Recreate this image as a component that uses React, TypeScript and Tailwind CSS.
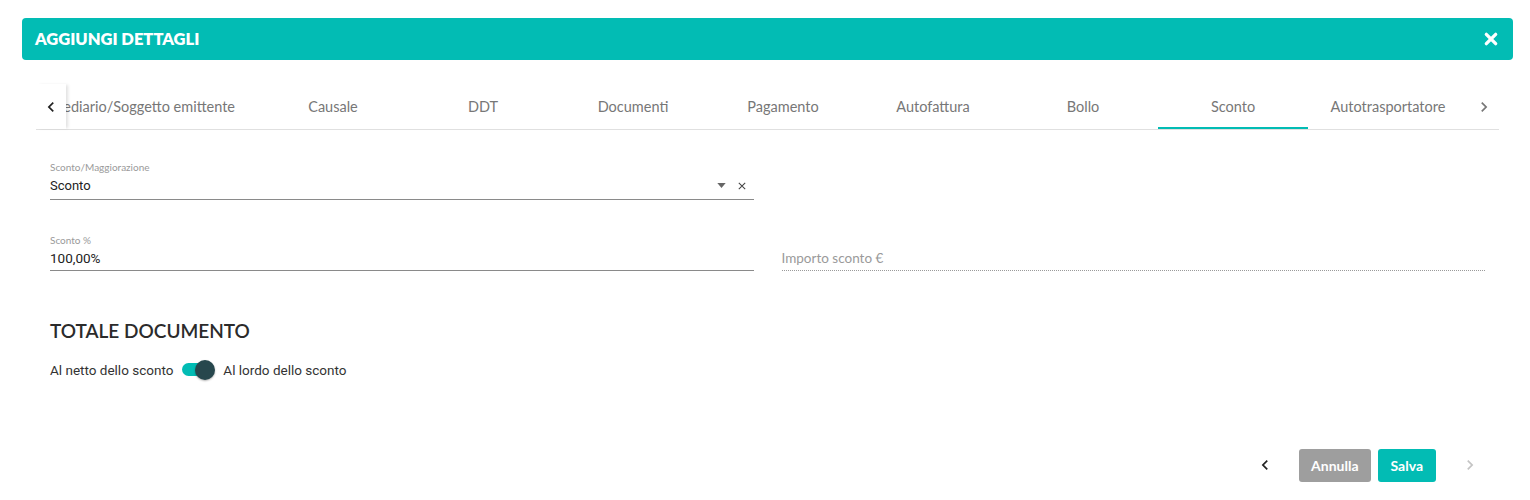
import React from 'react';

const TEAL = 'bg-[#02bcb4]';

const tabs = ['Causale', 'DDT', 'Documenti', 'Pagamento', 'Autofattura', 'Bollo', 'Sconto'];

const Chevron = ({ dir, className }: { dir: 'left' | 'right'; className?: string }) => (
    <svg viewBox="0 0 24 24" className={className} fill="currentColor">
        {dir === 'left' ? (
            <path d="M15.41 7.41 14 6l-6 6 6 6 1.41-1.41L10.83 12z" />
        ) : (
            <path d="M10 6 8.59 7.41 13.17 12l-4.58 4.59L10 18l6-6z" />
        )}
    </svg>
);

export default function App() {
    return (
        <div className="w-[1530px] h-[500px] bg-white font-['Lato','Noto_Sans',sans-serif] pt-[18px] px-[17px] pl-[22px]">
            {/* header */}
            <div className={`${TEAL} h-[42px] rounded-[4px] flex items-center justify-between px-[13px]`}>
                <span className="text-white font-extrabold text-[16.5px]">AGGIUNGI DETTAGLI</span>
                <svg viewBox="0 0 24 24" className="w-[16px] h-[16px] mr-[1px]" fill="none" stroke="white" strokeWidth="5" strokeLinecap="round">
                    <path d="M5 5l14 14M19 5 5 19" />
                </svg>
            </div>

            <div className="px-[14px]">
                {/* tabs */}
                <div className="mt-[24px] h-[46px] flex border-b border-[#e0e0e0]">
                    <div className="w-[30px] flex items-center justify-center shadow-[3px_0_3px_-1px_rgba(0,0,0,0.12)] z-10">
                        <Chevron dir="left" className="w-[20px] h-[20px] text-[#222]" />
                    </div>
                    <div className="flex-1 flex overflow-hidden">
                        <div className="shrink-0 w-[192px] flex items-center justify-end pr-[23px] text-[14.5px] text-[#777] whitespace-nowrap overflow-hidden">
                            <span className="shrink-0">Intermediario/Soggetto emittente</span>
                        </div>
                        {tabs.map((t) => (
                            <div
                                key={t}
                                className={`shrink-0 w-[150px] flex items-center justify-center text-[14.5px] text-[#777] ${t === 'Sconto' ? 'border-b-2 border-[#02bcb4] pt-[2px]' : ''}`}
                            >
                                {t}
                            </div>
                        ))}
                        <div className="shrink-0 w-[160px] flex items-center justify-center text-[14.5px] text-[#777]">
                            Autotrasportatore
                        </div>
                    </div>
                    <div className="w-[30px] flex items-center justify-center">
                        <Chevron dir="right" className="w-[20px] h-[20px] text-[#777]" />
                    </div>
                </div>

                {/* form */}
                <div className="px-[14px]">
                    <div className="mt-[31px] grid grid-cols-2 gap-x-[28px]">
                        <div>
                            <div className="text-[10px] text-[#9a9a9a] leading-[12px]">Sconto/Maggiorazione</div>
                            <div className="flex items-center h-[27px] pb-[1px] border-b border-[#8a8a8a] font-['Roboto',sans-serif] text-[13px] text-[#222]">
                                <span className="flex-1">Sconto</span>
                                <svg viewBox="0 0 10 6" className="w-[9px] h-[5px] mr-[12px]" fill="#666">
                                    <path d="M0 0h10L5 6z" />
                                </svg>
                                <svg viewBox="0 0 10 10" className="w-[8px] h-[8px] mr-[8px]" fill="none" stroke="#444" strokeWidth="1.3">
                                    <path d="M1 1l8 8M9 1 1 9" />
                                </svg>
                            </div>
                        </div>
                        <div />
                    </div>

                    <div className="mt-[34px] grid grid-cols-2 gap-x-[28px]">
                        <div>
                            <div className="text-[10px] text-[#9a9a9a] leading-[12px]">Sconto %</div>
                            <div className="flex items-center h-[25px] border-b border-[#8a8a8a] font-['Roboto',sans-serif] text-[13.5px] text-[#222]">
                                <span>100,00%</span>
                            </div>
                        </div>
                        <div className="pt-[12px]">
                            <div className="flex items-center h-[25px] border-b border-dotted border-[#9a9a9a] text-[13.5px] text-[#9a9a9a]">
                                <span>Importo sconto €</span>
                            </div>
                        </div>
                    </div>

                    <div className="mt-[46px] text-[19px] font-semibold text-[#2b2b2b]">TOTALE DOCUMENTO</div>

                    <div className="mt-[14px] flex items-center text-[13.5px] text-[#333] font-['Roboto',sans-serif]">
                        <span>Al netto dello sconto</span>
                        <div className="relative w-[34px] h-[20px] ml-[8px] mr-[8px] flex items-center">
                            <div className={`${TEAL} w-[30px] h-[13px] rounded-full ml-[1px]`} />
                            <div className="absolute right-0 top-0 w-[20px] h-[20px] rounded-full bg-[#27474d] shadow-[0_1px_2px_rgba(0,0,0,0.3)]" />
                        </div>
                        <span>Al lordo dello sconto</span>
                    </div>
                </div>

                {/* footer */}
                <div className="mt-[69px] flex items-center justify-end pr-[19px]">
                    <Chevron dir="left" className="w-[20px] h-[20px] text-[#222]" />
                    <button className="ml-[24px] h-[33px] px-[12px] rounded-[3px] bg-[#9e9e9e] text-white text-[14px] font-bold">
                        Annulla
                    </button>
                    <button className={`ml-[7px] h-[33px] px-[13px] rounded-[3px] ${TEAL} text-white text-[14px] font-bold`}>
                        Salva
                    </button>
                    <Chevron dir="right" className="ml-[24px] w-[20px] h-[20px] text-[#c4c4c4]" />
                </div>
            </div>
        </div>
    );
}
